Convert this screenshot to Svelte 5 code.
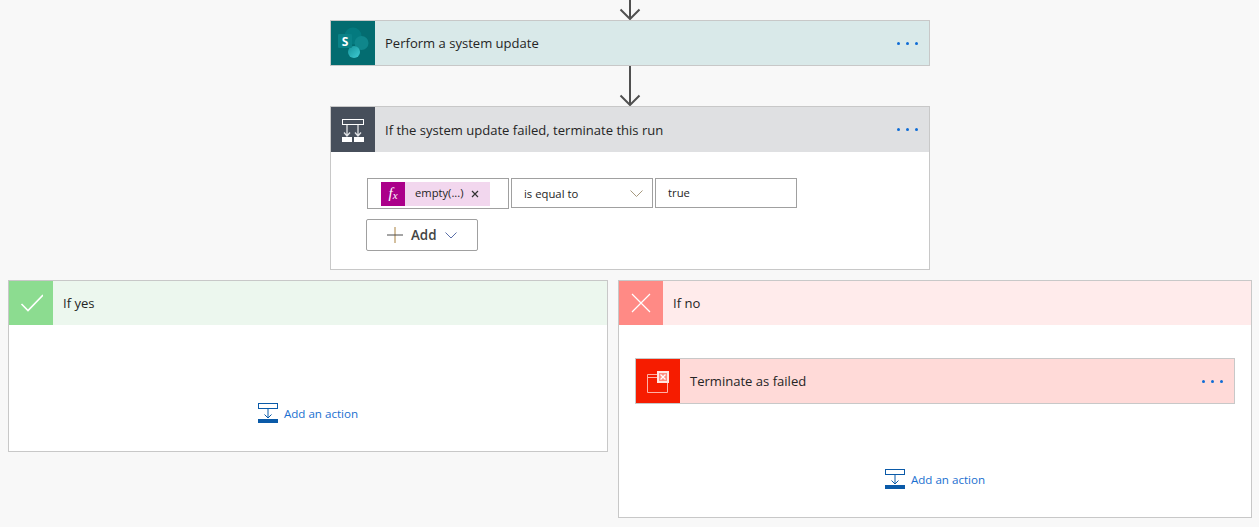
<script>
  const dots = [0, 1, 2];
</script>

{#snippet more()}
  <div class="more">{#each dots as d}<i class="dot"></i>{/each}</div>
{/snippet}

{#snippet arrow(h)}
  <svg class="arrow" width="24" height={h} viewBox="0 0 24 {h}">
    <path d="M12 0V{h - 1}M2.5 {h - 10.5}L12 {h - 1}L21.5 {h - 10.5}" fill="none" stroke="#505050" stroke-width="2" />
  </svg>
{/snippet}

{#snippet addAction()}
  <div class="add-action">
    <svg width="20" height="20" viewBox="0 0 20 20">
      <rect x="0.5" y="0.5" width="19" height="5" fill="none" stroke="#0a5aa8" />
      <path d="M10 6V15M6.5 11.5L10 15L13.5 11.5" fill="none" stroke="#0a5aa8" />
      <rect x="0" y="16" width="20" height="4" fill="#0a5aa8" />
    </svg>
    <span>Add an action</span>
  </div>
{/snippet}

<div class="page">
  <div class="center">
    {@render arrow(20)}
    <section class="card sp">
      <header>
        <div class="tile sp-tile">
          <svg width="32" height="32" viewBox="0 0 32 32">
            <defs>
              <linearGradient id="low" x1="0" y1="0" x2="1" y2="1">
                <stop offset="0" stop-color="#16959b" />
                <stop offset="1" stop-color="#3fcbd3" />
              </linearGradient>
            </defs>
            <circle cx="16" cy="9" r="8.5" fill="#047a7f" />
            <circle cx="24.5" cy="16" r="7" fill="#0f868b" />
            <circle cx="17" cy="25" r="6" fill="url(#low)" />
            <rect x="1" y="7" width="14" height="14" rx="1.2" fill="#0a8287" />
            <text x="8" y="18.5" class="s">S</text>
          </svg>
        </div>
        <h2>Perform a system update</h2>
        {@render more()}
      </header>
    </section>
    {@render arrow(40)}
    <section class="card cond">
      <header>
        <div class="tile cond-tile">
          <svg width="24" height="24" viewBox="0 0 24 24">
            <rect x="1.5" y="1.5" width="21" height="5" fill="none" stroke="#fff" />
            <path d="M6 7V18M3 14.5L6 18L9 14.5M17 7V18M14 14.5L17 18L20 14.5" fill="none" stroke="#dfe1e4" stroke-width="1.3" />
            <rect x="1" y="19" width="10" height="5" fill="#fff" />
            <rect x="13" y="19" width="10" height="5" fill="#fff" />
          </svg>
        </div>
        <h2>If the system update failed, terminate this run</h2>
        {@render more()}
      </header>
      <div class="cond-body">
        <div class="row">
          <div class="box token-box">
            <div class="token">
              <span class="fx">f<sub>x</sub></span>
              <span class="tname">empty(...)</span>
              <svg class="tclose" width="8" height="8" viewBox="0 0 8 8"><path d="M1 1L7 7M7 1L1 7" stroke="#333" stroke-width="1.2" /></svg>
            </div>
          </div>
          <div class="box select">
            <span>is equal to</span>
            <svg width="13" height="7" viewBox="0 0 13 7"><path d="M.5.5L6.5 6.5L12.5.5" fill="none" stroke="#a6997f" /></svg>
          </div>
          <div class="box value"><span>true</span></div>
        </div>
        <button class="add">
          <svg width="16" height="16" viewBox="0 0 16 16"><path d="M8 0V16" stroke="#a9803f" /><path d="M0 8H16" stroke="#4a4a4a" /></svg>
          <b>Add</b>
          <svg width="12" height="7" viewBox="0 0 12 7"><path d="M.5.5L6 6L11.5.5" fill="none" stroke="#5a6ea8" /></svg>
        </button>
      </div>
    </section>
  </div>
  <div class="branches">
    <section class="card branch yes">
      <header>
        <div class="tile yes-tile">
          <svg width="24" height="20" viewBox="0 0 24 20"><path d="M2.5 11L9 17.5L24 2" fill="none" stroke="#fff" stroke-width="1.6" /></svg>
        </div>
        <h2>If yes</h2>
      </header>
      <div class="yes-body">{@render addAction()}</div>
    </section>
    <section class="card branch no">
      <header>
        <div class="tile no-tile">
          <svg width="20" height="20" viewBox="0 0 20 20"><path d="M1 1L19 19M19 1L1 19" stroke="#fff" stroke-width="1.2" /></svg>
        </div>
        <h2>If no</h2>
      </header>
      <div class="no-body">
        <section class="card term">
          <header>
            <div class="tile term-tile">
              <svg width="22" height="24" viewBox="0 0 22 24">
                <path d="M10 5.5H.5V23.5H20.5V13M.5 8.5H10" fill="none" stroke="#ffb0a6" />
                <rect x="11" y="3" width="10" height="10" fill="#ff8d80" stroke="#ffe6e2" stroke-width="2" />
                <path d="M13.5 5.5L18.5 10.5M18.5 5.5L13.5 10.5" stroke="#fff" stroke-width="1.3" />
              </svg>
            </div>
            <h2>Terminate as failed</h2>
            {@render more()}
          </header>
        </section>
        {@render addAction()}
      </div>
    </section>
  </div>
</div>

<style>
  :global(body) {
    margin: 0;
    background: #f8f8f8;
  }
  .page {
    width: 1259px;
    height: 527px;
    overflow: hidden;
    font-family: "Open Sans", "Noto Sans", sans-serif;
    font-size: 13px;
    color: #252525;
  }
  .center {
    display: flex;
    flex-direction: column;
    align-items: center;
    padding-left: 1px;
  }
  .arrow {
    display: block;
  }
  .card {
    box-sizing: border-box;
    border: 1px solid #c8c8c8;
    background: #fff;
  }
  .center .card {
    width: 600px;
  }
  header {
    display: flex;
    align-items: center;
    height: 44px;
  }
  h2 {
    margin: 0 0 0 10px;
    font-size: 13.05px;
    font-weight: 400;
    flex: 1;
  }
  .tile {
    width: 44px;
    height: 100%;
    flex: none;
    display: flex;
    align-items: center;
    justify-content: center;
  }
  .sp header { background: #d9e9e9; }
  .sp-tile { background: #036c70; }
  .s {
    font: 700 12px "Open Sans", sans-serif;
    fill: #fff;
    text-anchor: middle;
  }
  .cond header { background: #dfe0e2; height: 45px; }
  .cond-tile { background: #474f5b; }
  .more {
    display: flex;
    gap: 6px;
    margin-right: 11px;
  }
  .dot {
    width: 3px;
    height: 3px;
    background: #0f6cd6;
    border-radius: 50%;
  }
  .cond-body {
    height: 117px;
    box-sizing: border-box;
    padding: 26px 0 0 35px;
  }
  .row {
    display: flex;
    align-items: flex-start;
    gap: 2px;
    margin-left: 1px;
  }
  .box {
    box-sizing: border-box;
    width: 142px;
    height: 30px;
    border: 1px solid #a0a0a0;
    display: flex;
    align-items: center;
    font-size: 11.3px;
  }
  .token-box {
    height: 31px;
    padding-left: 13px;
  }
  .token {
    display: flex;
    align-items: center;
    height: 24px;
    background: #f2d7ee;
  }
  .fx {
    width: 24px;
    height: 24px;
    background: #ab008a;
    color: #fff;
    font: italic 15px "Liberation Serif", serif;
    display: flex;
    align-items: center;
    justify-content: center;
  }
  .fx sub {
    font-size: 11px;
    vertical-align: baseline;
    position: relative;
    top: 1px;
  }
  .tname {
    margin: 0 0 2px 10px;
    font-size: 11.2px;
  }
  .tclose {
    margin: 1px 11px 0 7px;
  }
  .select {
    justify-content: space-between;
    padding: 1px 9px 0 12px;
  }
  .value {
    padding: 0 0 2px 12px;
  }
  .add {
    margin-top: 10px;
    width: 112px;
    height: 32px;
    box-sizing: border-box;
    background: #fff;
    border: 1px solid #a0a0a0;
    border-radius: 2px;
    padding: 0 0 0 20px;
    display: flex;
    align-items: center;
    font-family: inherit;
    color: #444;
  }
  .add b {
    font-size: 13.4px;
    font-weight: 600;
    margin: 0 8px;
  }
  .branches {
    display: flex;
    align-items: flex-start;
    gap: 10px;
    margin: 10px 0 0 8px;
  }
  .yes { width: 600px; height: 172px; }
  .no { width: 634px; height: 238px; }
  .yes header { background: #ecf7ee; }
  .yes-tile { background: #8cdc90; }
  .no header { background: #ffebeb; }
  .no-tile { background: #ff8a85; }
  .yes-body {
    padding-top: 78px;
  }
  .no-body {
    padding: 33px 16px 0 16px;
  }
  .term { margin-bottom: 65px; }
  .term header { background: #ffdad8; }
  .term-tile { background: #f61c00; }
  .add-action {
    display: flex;
    align-items: center;
    justify-content: center;
    gap: 6px;
    color: #1a6fd0;
    font-size: 11.6px;
  }
</style>
